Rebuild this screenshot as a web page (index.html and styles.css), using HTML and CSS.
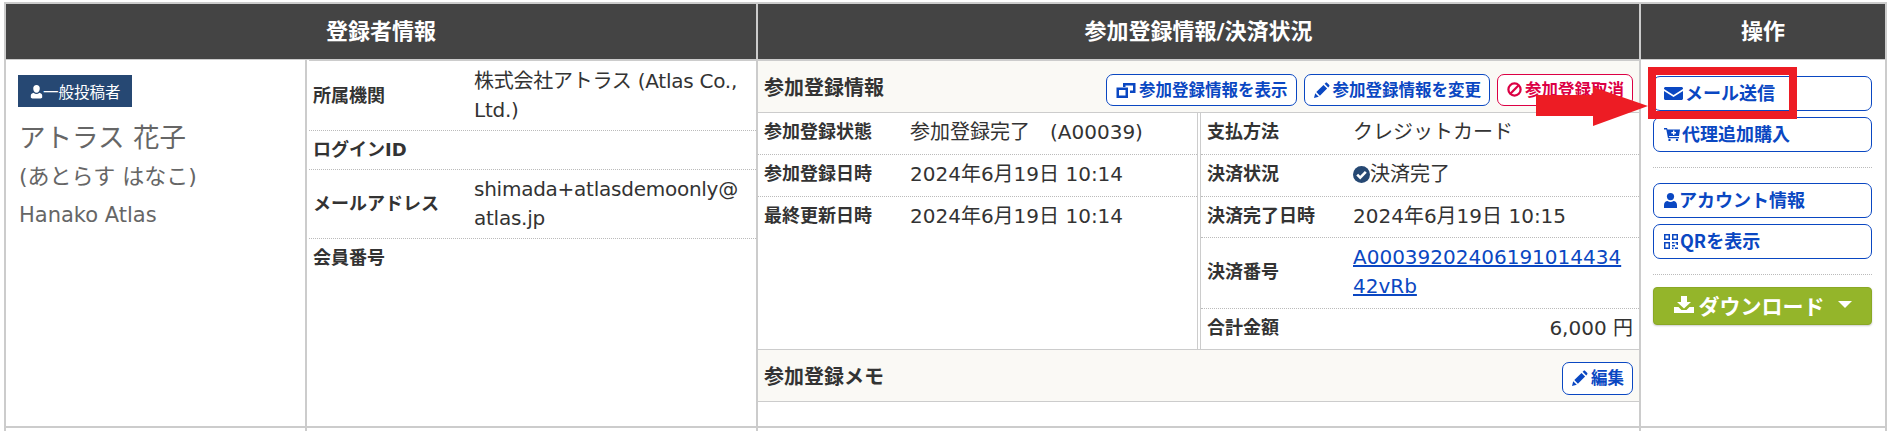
FILE: index.html
```html
<!DOCTYPE html>
<html lang="ja">
<head>
<meta charset="UTF-8">
<meta name="viewport" content="width=device-width, initial-scale=1.0">
<title>参加登録一覧</title>
<link rel="stylesheet" href="styles.css">
</head>
<body>
    <div class="sheet">
        <div class="head-row">
            <div class="head-cell col-user">登録者情報</div>
            <div class="head-cell col-reg">参加登録情報/決済状況</div>
            <div class="head-cell col-ops">操作</div>
        </div>

        <div class="body-row">
            <div class="col-user user-col">
                <div class="user-card">
                    <div class="badge">
                        <svg class="icon-user-small" viewBox="0 0 16 18"><path d="M8 1a4 4 0 0 1 4 4.5c0 2.4-1.7 5-4 5s-4-2.600-4-5A4 4 0 0 1 8 1zM4.500 10.500c1 1 2.200 1.500 3.500 1.500s2.500-.5 3.500-1.500c2 .5 3.500 1.800 3.500 3.500v2c0 .6-.9 1.500-2 1.500H3c-1.100 0-2-.9-2-1.500v-2c0-1.700 1.500-3 3.500-3.500z"/></svg>一般投稿者
                    </div>
                    <div class="user-name">アトラス 花子</div>
                    <div class="user-kana">(あとらす はなこ)</div>
                    <div class="user-roman">Hanako Atlas</div>
                </div>
                <div class="info-list">
                    <div class="info-row"><div class="label">所属機関</div><div>株式会社アトラス (Atlas Co., Ltd.)</div></div>
                    <div class="info-row tight"><div class="label">ログインID</div><div></div></div>
                    <div class="info-row"><div class="label">メールアドレス</div><div>shimada+atlasdemoonly@<br>atlas.jp</div></div>
                    <div class="info-row last"><div class="label">会員番号</div><div></div></div>
                </div>
            </div>

            <div class="col-reg reg-col">
                <div class="section-head">
                    <div class="section-title">参加登録情報</div>
                    <div class="btn-group">
                        <a class="btn" href="#">
                            <svg class="icon-window" viewBox="0 0 20 16"><path d="M7 1h12.500v10H14V8.500h3V3.500H9.500V5H7zM.5 5.500H12V16H.5zM3 8v5.500h6.500V8z" fill-rule="evenodd"/></svg>参加登録情報を表示
                        </a>
                        <a class="btn" href="#">
                            <svg class="icon-pencil" viewBox="0 0 16 16"><path d="M0 16l1.200-4.800 3.600 3.600zM2.300 10.100l7.200-7.200 3.600 3.600-7.200 7.200zM10.600 1.800l.9-.9c.5-.5 1.200-.5 1.700 0l1.900 1.900c.5.500.5 1.200 0 1.700l-.9.900z"/></svg>参加登録情報を変更
                        </a>
                        <a class="btn btn-red" href="#">
                            <svg class="icon-ban" viewBox="0 0 16 16"><circle cx="8" cy="8" r="6.500" fill="none" stroke="currentColor" stroke-width="2.400"/><path d="M3.500 12.500l9-9" stroke="currentColor" stroke-width="2.400"/></svg>参加登録取消
                        </a>
                    </div>
                </div>

                <div class="panels">
                    <div class="panel panel-left">
                        <div class="info-row reg-row"><div class="label">参加登録状態</div><div>参加登録完了　(A00039)</div></div>
                        <div class="info-row reg-row"><div class="label">参加登録日時</div><div>2024年6月19日 10:14</div></div>
                        <div class="info-row reg-row last"><div class="label">最終更新日時</div><div>2024年6月19日 10:14</div></div>
                    </div>
                    <div class="panel panel-right">
                        <div class="info-row reg-row"><div class="label">支払方法</div><div>クレジットカード</div></div>
                        <div class="info-row reg-row"><div class="label">決済状況</div><div class="paid">
                            <svg class="icon-check" viewBox="0 0 17 17"><circle cx="8.500" cy="8.500" r="8.500"/><path d="M4.200 8.600l3 3 5.600-5.800" fill="none" stroke="#fff" stroke-width="2.600"/></svg>決済完了
                        </div></div>
                        <div class="info-row reg-row row-short"><div class="label">決済完了日時</div><div>2024年6月19日 10:15</div></div>
                        <div class="info-row reg-row"><div class="label">決済番号</div><div><a class="pay-link" href="#">A00039202406191014434<br>42vRb</a></div></div>
                        <div class="info-row reg-row row-short last"><div class="label">合計金額</div><div class="amount">6,000 円</div></div>
                    </div>
                </div>

                <div class="section-head memo-head">
                    <div class="section-title">参加登録メモ</div>
                    <a class="btn btn-edit" href="#">
                        <svg class="icon-pencil" viewBox="0 0 16 16"><path d="M0 16l1.200-4.800 3.600 3.600zM2.300 10.100l7.200-7.200 3.600 3.600-7.200 7.200zM10.600 1.800l.9-.9c.5-.5 1.200-.5 1.700 0l1.900 1.900c.5.500.5 1.200 0 1.700l-.9.900z"/></svg>編集
                    </a>
                </div>
            </div>

            <div class="col-ops ops-col">
                <a class="btn btn-op" href="#">
                    <svg class="icon-mail" viewBox="0 0 19 13"><path d="M0 1.500C0 .7.700 0 1.500 0h16c.8 0 1.500.7 1.500 1.500V2L9.500 8 0 2zM0 4l9.500 6L19 4v7.500c0 .8-.7 1.500-1.500 1.500h-16C.7 13 0 12.300 0 11.500z"/></svg>メール送信
                </a>
                <a class="btn btn-op" href="#">
                    <svg class="icon-cart" viewBox="0 0 16 13"><path d="M0 0h3l.5 1.500H16l-1 6.500H5l.2 1H15v1.200H4L2.300 1.400H0zM9 2.500v1.600H7.400v1.300H9V7h1.400V5.400H12V4.100h-1.600V2.500z" fill-rule="evenodd"/><circle cx="5.500" cy="12" r="1.200"/><circle cx="13" cy="12" r="1.200"/></svg>代理追加購入
                </a>
                <div class="ops-divider"></div>
                <a class="btn btn-op" href="#">
                    <svg class="icon-person" viewBox="0 0 13 15"><circle cx="6.500" cy="3.600" r="3.600"/><path d="M0 15v-3c0-2.500 1.800-4 3.500-4 1 .6 2 .9 3 .9s2-.3 3-.9c1.700 0 3.500 1.500 3.500 4v3z"/></svg>アカウント情報
                </a>
                <a class="btn btn-op" href="#">
                    <svg class="icon-qr" viewBox="0 0 14 15"><path d="M0 0h6v6H0zM1.500 1.500v3h3v-3zM8 0h6v6H8zM9.500 1.500v3h3v-3zM0 8h6v7H0zM1.500 9.500v4h3v-4zM8 8h2.500v1.500H8zM11.500 8H14v3h-1.500V9.500h-1zM8 11h3v1.500H8zM8 13.500h1.500V15H8zM11 13.500h3V15h-3z" fill-rule="evenodd"/></svg>QRを表示
                </a>
                <div class="ops-divider"></div>
                <a class="btn-download" href="#">
                    <svg class="icon-download" viewBox="0 0 20 17"><path d="M7 0h6v6h4l-7 6.500L3 6h4zM0 11h4.500l3 3h5l3-3H20v6H0z"/></svg>ダウンロード
                    <svg class="icon-caret" viewBox="0 0 14 7"><path d="M0 0h14L7 7z"/></svg>
                </a>
            </div>
        </div>

        <div class="next-row">
            <div class="col-user next-user"><div class="next-left"></div></div>
            <div class="col-reg"></div>
            <div class="col-ops"></div>
        </div>
    </div>

    <!-- 説明用の赤枠と矢印 -->
    <div class="mark-box"></div>
    <svg class="mark-arrow" viewBox="0 0 112 39"><polygon points="0,8 57,8 57,0 112,19 57,39 57,29 0,29"/></svg>
</body>
</html>
```

FILE: styles.css
```css
html, body {
    height: 431px;
    overflow: hidden;
}
body {
    margin: 0;
    padding: 2px 0 0 4px;
    box-sizing: border-box;
    position: relative;
    background-color: #ffffff;
    font-family: "DejaVu Sans", "Noto Sans CJK JP", sans-serif;
    color: #333;
    font-size: 20px;
}
a {
    text-decoration: none;
}
svg {
    fill: currentColor;
    flex-shrink: 0;
}

/* columns */
.sheet {
    width: 1883px;
    border-top: 2px solid #ccc;
    box-sizing: border-box;
}
.head-row, .body-row, .next-row {
    display: flex;
}
.col-user, .col-reg, .col-ops {
    box-sizing: border-box;
    border-right: 2px solid #ccc;
}
.col-user {
    width: 754px;
    border-left: 2px solid #ccc;
}
.col-reg {
    width: 883px;
}
.col-ops {
    width: 246px;
}

/* header */
.head-row {
    height: 56px;
    border-bottom: 1px solid #ccc;
    box-sizing: border-box;
}
.head-cell {
    height: 55px;
    background-color: #444;
    color: #fff;
    font-size: 22px;
    font-weight: bold;
    display: flex;
    align-items: center;
    justify-content: center;
    padding-bottom: 5px;
}

/* body */
.body-row {
    height: 366px;
    border-bottom: 2px solid #ccc;
}
.user-col {
    display: flex;
}
.user-card {
    width: 301px;
    box-sizing: border-box;
    border-right: 2px solid #ccc;
    padding: 15px 12px;
}
.badge {
    width: 114px;
    height: 32px;
    box-sizing: border-box;
    background-color: #264873;
    color: #fff;
    font-size: 15.5px;
    display: flex;
    align-items: center;
    padding-left: 12px;
    margin-bottom: 12px;
}
.icon-user-small {
    width: 13px;
    height: 15px;
}
.user-name, .user-kana, .user-roman {
    color: #666;
    margin-left: 1px;
}
.user-name {
    font-size: 26.5px;
    line-height: 38px;
}
.user-kana {
    font-size: 22px;
    line-height: 39px;
}
.user-roman {
    font-size: 21px;
    line-height: 38px;
}
.info-list {
    flex: 1;
    margin-left: 2px;
    border-top: 1px solid #ccc;
    padding-top: 1px;
    letter-spacing: -0.25px;
}
.info-row {
    display: grid;
    grid-template-columns: 161px 1fr;
    align-items: center;
    padding: 5px 0 5px 4px;
    line-height: 29px;
    min-height: 29px;
    border-bottom: 1px dotted #bbb;
}
.info-row.tight {
    padding-bottom: 4px;
}
.info-row.last {
    border-bottom: none;
}
.label {
    font-size: 18px;
    font-weight: bold;
    letter-spacing: 0;
    margin-top: -1px;
    margin-bottom: 1px;
}

/* registration */
.section-head {
    height: 51px;
    border-top: 1px solid #ccc;
    border-bottom: 1px solid #ccc;
    background-color: #faf9f5;
    display: flex;
    align-items: center;
    justify-content: space-between;
    padding: 0 6px;
}
.section-title {
    font-size: 20px;
    font-weight: bold;
    margin-top: -1px;
}
.memo-head {
    border-top: none;
}
.btn-group {
    display: flex;
    gap: 7px;
    margin-top: 7px;
}
.btn {
    display: flex;
    align-items: center;
    height: 32px;
    box-sizing: border-box;
    padding: 0 8px 3px 9px;
    border: 1px solid #0a47c2;
    border-radius: 7px;
    background-color: #fff;
    color: #0a47c2;
    font-family: "Noto Sans CJK JP", sans-serif;
    font-size: 16.5px;
    font-weight: bold;
    gap: 3px;
}
.btn svg {
    position: relative;
    top: 1px;
}
.btn-red {
    border-color: #dc0044;
    color: #dc0044;
}
.btn-edit {
    height: 33px;
    margin-top: 6px;
}
.icon-window {
    width: 20px;
    height: 16px;
}
.icon-pencil {
    width: 16px;
    height: 16px;
}
.icon-ban {
    width: 15px;
    height: 15px;
}

.panels {
    display: flex;
    height: 236px;
    border-bottom: 1px solid #ccc;
}
.panel-left {
    width: 439px;
    border-right: 1px solid #ccc;
}
.panel-right {
    flex: 1;
    margin-left: 2px;
    border-left: 1px solid #ccc;
}
.reg-row {
    grid-template-columns: 146px 1fr;
    padding: 6px 6px;
}
.reg-row .label {
    margin-top: -2px;
    margin-bottom: 2px;
}
.reg-row > div:last-child {
    margin-top: -1px;
    margin-bottom: 1px;
}
.row-short {
    padding: 5.5px 6px;
}
.paid {
    display: flex;
    align-items: center;
}
.icon-check {
    width: 17px;
    height: 17px;
    color: #264873;
}
.pay-link {
    color: #0a47c2;
    text-decoration: underline;
    text-decoration-thickness: 2px;
}
.amount {
    text-align: right;
}

/* operations */
.ops-col {
    padding: 16px 13px 0 12px;
}
.btn-op {
    height: 35px;
    font-size: 18px;
    padding: 0 10px 3px;
    gap: 2px;
    margin-bottom: 6px;
}
.btn-op:has(+ .ops-divider) {
    margin-bottom: 0;
}
.ops-divider {
    border-top: 1px dotted #bbb;
    margin: 15px 0;
}
.ops-divider:last-of-type {
    margin-bottom: 12px;
}
.icon-mail {
    width: 19px;
    height: 13px;
}
.icon-cart {
    width: 16px;
    height: 13px;
}
.icon-person {
    width: 13px;
    height: 15px;
}
.icon-qr {
    width: 14px;
    height: 15px;
}
.btn-download {
    display: flex;
    align-items: center;
    justify-content: center;
    gap: 5px;
    height: 38px;
    box-sizing: border-box;
    padding-bottom: 3px;
    border: 1px solid #8aa825;
    border-radius: 4px;
    background-color: #94b52a;
    box-shadow: 0 1px 2px rgba(0, 0, 0, 0.2);
    color: #fff;
    font-family: "Noto Sans CJK JP", sans-serif;
    font-size: 21px;
    font-weight: bold;
}
.icon-download {
    width: 20px;
    height: 17px;
}
.icon-caret {
    width: 14px;
    height: 7px;
    margin-left: 8px;
}

/* next row, only its top shows */
.next-row {
    height: 3px;
}
.next-user {
    display: flex;
}
.next-left {
    width: 301px;
    box-sizing: border-box;
    border-right: 2px solid #ccc;
}

/* red annotation */
.mark-box {
    position: absolute;
    left: 1648px;
    top: 67px;
    width: 149px;
    height: 52px;
    box-sizing: border-box;
    border: 8px solid #ed1c24;
}
.mark-arrow {
    position: absolute;
    left: 1536px;
    top: 87px;
    width: 112px;
    height: 39px;
    fill: #ed1c24;
}
```
